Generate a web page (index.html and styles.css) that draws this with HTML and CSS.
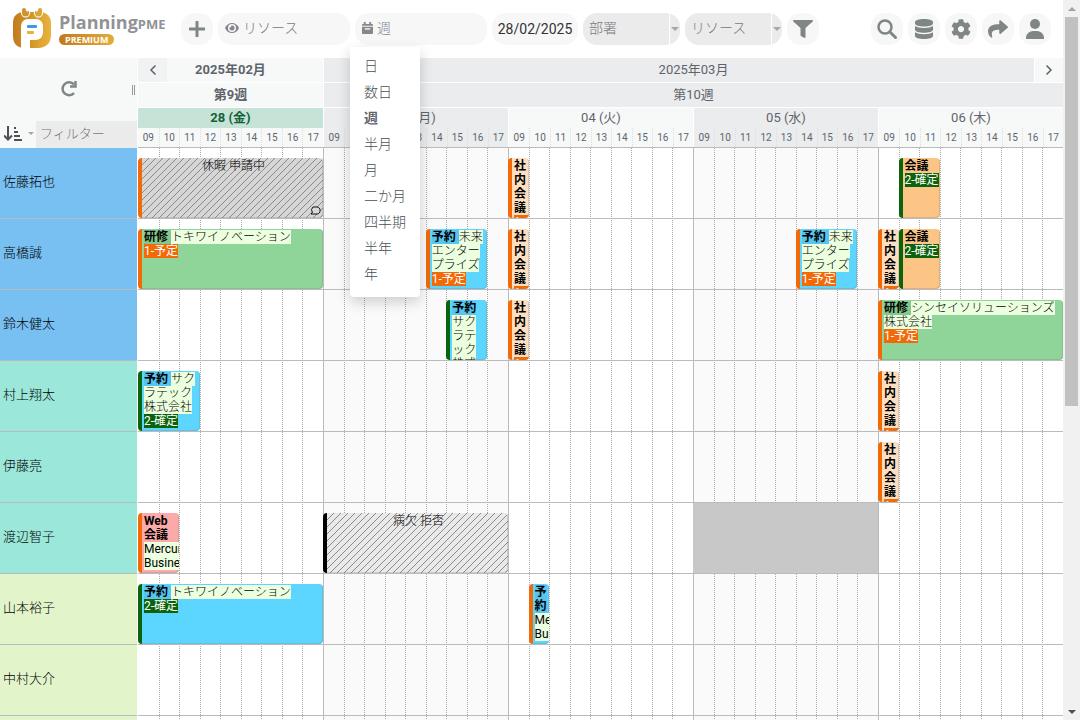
FILE: index.html
```html
<!DOCTYPE html>
<html lang="ja">
<head>
<meta charset="utf-8">
<title>PlanningPME</title>
<link rel="stylesheet" href="styles.css">
</head>
<body>
<div class="page">
  <header class="topbar">
    <a class="brand" href="#" aria-label="PlanningPME Premium">
      <svg class="brand-mark" viewBox="0 0 39 41" aria-hidden="true">
        <defs><linearGradient id="gold" x1="0" y1="0" x2="1" y2="0"><stop offset="0" stop-color="#c27a1c"/><stop offset="1" stop-color="#e8b43c"/></linearGradient></defs>
        <path fill="url(#gold)" d="M12 4h16c7 0 11 5 11 11v12c0 8-5 13-13 13H13C5 40 1 36 1 28V15C1 8 5 4 12 4z"/>
        <path fill="#fff" d="M9 41V19c0-5 3-8 7-8h8c4 0 7 3 7 7v6c0 5-3 8-8 8h-5v9z"/>
        <path fill="#fff" d="M9 3h9v2a4 4 0 0 1-9 0zM22 3h9v2a4 4 0 0 1-9 0z"/>
        <path fill="#d0922a" d="M10 2a2 2 0 0 1 4 0c0 2 3 2 3 0v3a3.500 3.500 0 0 1-7 0z"/>
        <path fill="#dca433" d="M23 2c0 2 3 2 3 0a2 2 0 0 1 4 0v3a3.500 3.500 0 0 1-7 0z"/>
        <rect x="15" y="17" width="10" height="3" rx="1" fill="#3a9ae8"/><rect x="15" y="23" width="7" height="3" rx="1" fill="#e5b23c"/>
      </svg>
      <span class="brand-words">
        <span class="brand-name">Planning<small>PME</small></span>
        <span class="brand-badge">PREMIUM</span>
      </span>
    </a>
    <button class="round" aria-label="追加"><svg width="16" height="16" viewBox="0 0 16 16"><path d="M8 1v14M1 8h14" fill="none" stroke="currentColor" stroke-width="3" stroke-linecap="round"/></svg></button>
    <label class="pill">
      <svg width="14" height="12" viewBox="0 0 14 12"><path fill="currentColor" fill-rule="evenodd" d="M7 1c3 0 6 2 7 5-1 3-4 5-7 5S1 9 0 6c1-3 4-5 7-5zm0 1a4 4 0 1 0 0 8 4 4 0 0 0 0-8zm0 1.500a2.500 2.500 0 1 1-2.400 1.800A1.400 1.400 0 0 0 6.300 3.600z"/></svg>
      <input type="text" placeholder="リソース" aria-label="リソース">
    </label>
    <div class="view">
      <button class="pill" aria-haspopup="listbox" aria-expanded="true">
        <svg width="11" height="12" viewBox="0 0 12 13"><path fill="currentColor" d="M2 0h2v2h4V0h2v2h1a1 1 0 0 1 1 1v1H0V3a1 1 0 0 1 1-1h1zM0 5h12v7a1 1 0 0 1-1 1H1a1 1 0 0 1-1-1z"/><path d="M3 7.500h6" stroke="#f7f7f7" stroke-width="1.500"/></svg>
        <span>週</span>
      </button>
      <ul class="menu" role="listbox">
        <li role="option">日</li>
        <li role="option">数日</li>
        <li role="option" aria-selected="true" class="current">週</li>
        <li role="option">半月</li>
        <li role="option">月</li>
        <li role="option">二か月</li>
        <li role="option">四半期</li>
        <li role="option">半年</li>
        <li role="option">年</li>
      </ul>
    </div>
    <input class="date" type="text" value="28/02/2025" aria-label="日付">
    <div class="combo"><select aria-label="部署"><option>部署</option></select><span class="combo-arrow"></span></div>
    <div class="combo"><select aria-label="リソース"><option>リソース</option></select><span class="combo-arrow"></span></div>
    <button class="round" aria-label="フィルター"><svg width="20" height="18" viewBox="0 0 512 512" preserveAspectRatio="none"><path fill="currentColor" d="M487.976 0H24.028C2.710 0-8.047 25.866 7.058 40.971L192 225.941V432c0 7.831 3.821 15.170 10.237 19.662l80 55.980C298.020 518.690 320 507.493 320 487.980V225.941l184.947-184.970C520.021 25.896 509.338 0 487.976 0z"/></svg></button>
    <div class="tools">
      <button class="round" aria-label="検索"><svg width="20" height="20" viewBox="0 0 20 20" fill="none" stroke="currentColor"><circle cx="8" cy="8" r="6.500" stroke-width="2.500"/><path d="M13 13l5.500 5.500" stroke-width="3" stroke-linecap="round"/></svg></button>
      <button class="round" aria-label="データ"><svg width="18" height="20" viewBox="0 0 18 20" fill="currentColor"><path d="M9 0c5 0 9 1.300 9 3v1.500c0 1.700-4 3-9 3s-9-1.300-9-3V3c0-1.700 4-3 9-3zM0 7c2 1.300 5 2 9 2s7-.7 9-2v3.800c0 1.700-4 3-9 3s-9-1.300-9-3zM0 13.200c2 1.300 5 2 9 2s7-.7 9-2V17c0 1.700-4 3-9 3s-9-1.300-9-3z"/></svg></button>
      <button class="round" aria-label="設定"><svg width="20" height="20" viewBox="0 0 512 512"><path fill="currentColor" d="M487.400 315.700l-42.600-24.600c4.300-23.200 4.300-47 0-70.200l42.600-24.600c4.900-2.800 7.100-8.600 5.500-14-11.100-35.600-30-67.800-54.700-94.600-3.800-4.100-10-5.100-14.800-2.300L380.800 110c-17.900-15.400-38.500-27.300-60.800-35.100V25.800c0-5.600-3.900-10.500-9.400-11.700-36.700-8.200-74.300-7.800-109.200 0-5.500 1.200-9.400 6.100-9.400 11.700V75c-22.200 7.900-42.800 19.800-60.800 35.100L88.700 85.500c-4.900-2.800-11-1.900-14.800 2.300-24.700 26.700-43.600 58.900-54.700 94.600-1.700 5.400.6 11.200 5.500 14L67.300 221c-4.300 23.200-4.300 47 0 70.200l-42.600 24.600c-4.900 2.800-7.100 8.600-5.500 14 11.100 35.600 30 67.800 54.700 94.600 3.800 4.100 10 5.100 14.800 2.300l42.600-24.600c17.900 15.400 38.500 27.300 60.800 35.100v49.200c0 5.600 3.900 10.500 9.400 11.700 36.700 8.200 74.300 7.800 109.200 0 5.500-1.200 9.400-6.100 9.400-11.700v-49.200c22.200-7.900 42.800-19.800 60.800-35.100l42.600 24.600c4.900 2.800 11 1.900 14.800-2.300 24.700-26.700 43.600-58.900 54.700-94.600 1.500-5.500-.7-11.300-5.600-14.100zM256 336c-44.100 0-80-35.900-80-80s35.900-80 80-80 80 35.900 80 80-35.900 80-80 80z"/></svg></button>
      <button class="round" aria-label="共有"><svg width="20" height="20" viewBox="0 0 512 512"><path fill="currentColor" d="M503.691 189.836L327.687 37.851C312.281 24.546 288 35.347 288 56.015v80.053C127.371 137.907 0 170.100 0 322.326c0 61.441 39.581 122.309 83.333 154.132 13.653 9.931 33.111-2.533 28.077-18.631C66.066 312.814 132.917 274.316 288 272.085V360c0 20.700 24.300 31.453 39.687 18.164l176.004-152c11.071-9.562 11.086-26.753 0-36.328z"/></svg></button>
      <button class="round" aria-label="アカウント"><svg width="18" height="20" viewBox="0 0 18 20" fill="currentColor"><circle cx="9" cy="5" r="5"/><path d="M0 20v-2a7 7 0 0 1 7-6h4a7 7 0 0 1 7 6v2z"/></svg></button>
    </div>
  </header>

  <main class="schedule">
    <div class="head">
      <div class="corner">
        <div class="corner-top">
          <button class="refresh" aria-label="更新"><svg width="18" height="17" viewBox="0 0 18 17" fill="none" stroke="currentColor" stroke-width="2.500"><path d="M14 4.500A6.500 6.500 0 1 0 14 13"/><path d="M15.500 1v5.500H10" /></svg></button>
          <span class="grip"></span>
        </div>
        <div class="corner-filter">
          <button class="sort" aria-label="並べ替え"><svg width="18" height="15" viewBox="0 0 18 15" fill="none" stroke="currentColor" stroke-width="2"><path d="M4 0v13M0 9.500l4 4 4-4"/><path d="M10 2h2M10 6h4M10 10h6M10 14h8"/></svg><i class="caret"></i></button>
          <input type="text" placeholder="フィルター" aria-label="フィルター">
        </div>
      </div>
      <div class="axis">
        <div class="band months">
          <div class="light strong"><button class="nav" aria-label="前へ"><svg width="8" height="12" viewBox="0 0 8 12"><path d="M6.500 1.500L2 6l4.500 4.500" fill="none" stroke="currentColor" stroke-width="1.500"/></svg></button><span>2025年02月</span></div>
          <div class="dark wide"><span>2025年03月</span><button class="nav next" aria-label="次へ"><svg width="8" height="12" viewBox="0 0 8 12"><path d="M1.500 1.500L6 6l-4.500 4.500" fill="none" stroke="currentColor" stroke-width="1.500"/></svg></button></div>
        </div>
        <div class="band weeks">
          <div class="light strong">第9週</div>
          <div class="dark wide">第10週</div>
        </div>
        <div class="band days">
          <div class="today strong">28 (金)</div>
          <div class="dark">03 (月)</div>
          <div class="light">04 (火)</div>
          <div class="dark">05 (水)</div>
          <div class="light">06 (木)</div>
        </div>
        <div class="band hours">
          <div class="light"><span>09</span><span>10</span><span>11</span><span>12</span><span>13</span><span>14</span><span>15</span><span>16</span><span>17</span></div>
          <div class="dark"><span>09</span><span>10</span><span>11</span><span>12</span><span>13</span><span>14</span><span>15</span><span>16</span><span>17</span></div>
          <div class="light"><span>09</span><span>10</span><span>11</span><span>12</span><span>13</span><span>14</span><span>15</span><span>16</span><span>17</span></div>
          <div class="dark"><span>09</span><span>10</span><span>11</span><span>12</span><span>13</span><span>14</span><span>15</span><span>16</span><span>17</span></div>
          <div class="light"><span>09</span><span>10</span><span>11</span><span>12</span><span>13</span><span>14</span><span>15</span><span>16</span><span>17</span></div>
        </div>
      </div>
    </div>

    <div class="board">
      <div class="lines" aria-hidden="true">
        <div><i></i><i></i><i></i><i></i><i></i><i></i><i></i><i></i><i></i></div>
        <div class="alt"><i></i><i></i><i></i><i></i><i></i><i></i><i></i><i></i><i></i></div>
        <div><i></i><i></i><i></i><i></i><i></i><i></i><i></i><i></i><i></i></div>
        <div class="alt"><i></i><i></i><i></i><i></i><i></i><i></i><i></i><i></i><i></i></div>
        <div><i></i><i></i><i></i><i></i><i></i><i></i><i></i><i></i><i></i></div>
      </div>
      <div class="rows">
        <div class="row">
          <div class="name team-a">佐藤拓也</div>
          <div class="lane">
            <div class="event planned leave pending" style="grid-column:1 / span 9">休暇 申請中<svg class="note" width="11" height="10" viewBox="0 0 11 10"><path d="M3 1h4a3 3 0 0 1 3 3.500A3 3 0 0 1 7 8H1l1.500-1.500A4 4 0 0 1 3 1z" fill="#d9d9d9" stroke="#111" stroke-width="1"/></svg></div>
            <div class="event planned internal" style="grid-column:19 / span 1"><b>社内会議 </b><em>1-予定</em></div>
            <div class="event fixed meeting" style="grid-column:38 / span 2"><b>会議 </b><em>2-確定</em></div>
          </div>
        </div>
        <div class="row">
          <div class="name team-a">高橋誠</div>
          <div class="lane">
            <div class="event planned training" style="grid-column:1 / span 9"><b>研修 </b><span>トキワイノベーション</span><br><em>1-予定</em></div>
            <div class="event planned booking" style="grid-column:15 / span 3"><b>予約 </b><span>未来エンタープライズ</span><br><em>1-予定</em></div>
            <div class="event planned internal" style="grid-column:19 / span 1"><b>社内会議 </b><em>1-予定</em></div>
            <div class="event planned booking" style="grid-column:33 / span 3"><b>予約 </b><span>未来エンタープライズ</span><br><em>1-予定</em></div>
            <div class="event planned internal" style="grid-column:37 / span 1"><b>社内会議 </b><em>1-予定</em></div>
            <div class="event fixed meeting" style="grid-column:38 / span 2"><b>会議 </b><em>2-確定</em></div>
          </div>
        </div>
        <div class="row">
          <div class="name team-a">鈴木健太</div>
          <div class="lane">
            <div class="event fixed booking" style="grid-column:16 / span 2"><b>予約 </b><span>サクラテック株式会社</span><br><em>2-確定</em></div>
            <div class="event planned internal" style="grid-column:19 / span 1"><b>社内会議 </b><em>1-予定</em></div>
            <div class="event planned training" style="grid-column:37 / span 9"><b>研修 </b><span>シンセイソリューションズ株式会社</span><br><em>1-予定</em></div>
          </div>
        </div>
        <div class="row">
          <div class="name team-b">村上翔太</div>
          <div class="lane">
            <div class="event fixed booking" style="grid-column:1 / span 3"><b>予約 </b><span>サクラテック株式会社</span><br><em>2-確定</em></div>
            <div class="event planned internal" style="grid-column:37 / span 1"><b>社内会議 </b><em>1-予定</em></div>
          </div>
        </div>
        <div class="row">
          <div class="name team-b">伊藤亮</div>
          <div class="lane">
            <div class="event planned internal" style="grid-column:37 / span 1"><b>社内会議 </b><em>1-予定</em></div>
          </div>
        </div>
        <div class="row">
          <div class="name team-b">渡辺智子</div>
          <div class="lane">
            <div class="event planned web" style="grid-column:1 / span 2"><b>Web 会議 </b><span class="latin">Mercury Business</span></div>
            <div class="event refused leave" style="grid-column:10 / span 9">病欠 拒否</div>
            <div class="closed" style="grid-column:28 / span 9"></div>
          </div>
        </div>
        <div class="row">
          <div class="name team-c">山本裕子</div>
          <div class="lane">
            <div class="event fixed booking" style="grid-column:1 / span 9"><b>予約 </b><span>トキワイノベーション</span><br><em>2-確定</em></div>
            <div class="event planned booking" style="grid-column:20 / span 1"><b>予約 </b><span class="latin">Mercury Business</span></div>
          </div>
        </div>
        <div class="row">
          <div class="name team-c">中村大介</div>
          <div class="lane"></div>
        </div>
        <div class="row">
          <div class="name team-c"></div>
          <div class="lane"></div>
        </div>
      </div>
    </div>
  </main>
</div>
<div class="scrollbar" aria-hidden="true"><span class="arrow up"></span><span class="thumb"></span><span class="arrow down"></span></div>
</body>
</html>
```
FILE: styles.css
```css
* { box-sizing: border-box; }

body {
  margin: 0;
  height: 100vh;
  display: flex;
  overflow: hidden;
  background: #fff;
  color: #5f646c;
  font: 13px/20px Roboto, "Noto Sans CJK JP", sans-serif;
}

button, input, select {
  margin: 0;
  padding: 0;
  border: 0;
  background: none;
  color: inherit;
  font: inherit;
  outline: 0;
}

svg { display: block; flex: none; }

.page {
  flex: 1;
  min-width: 0;
  display: flex;
  flex-direction: column;
}

/* Top bar */
.topbar {
  flex: none;
  display: flex;
  align-items: center;
  gap: 5px;
  height: 58px;
  padding: 0 12px 1px;
  font-size: 14px;
  font-weight: 300;
}

.brand {
  flex: none;
  display: flex;
  gap: 8px;
  width: 164px;
  text-decoration: none;
}

.brand-mark { width: 39px; height: 41px; }

.brand-words {
  display: flex;
  flex-direction: column;
  align-items: flex-start;
  padding-top: 4px;
}

.brand-name {
  font: 700 18px/20px "Open Sans", sans-serif;
  color: #929297;
  white-space: nowrap;
}

.brand-name small { font-size: 13px; }

.brand-badge {
  padding: 0 6px;
  border-radius: 6px;
  background: linear-gradient(90deg, #c27a1c, #e3ad39);
  color: #fff;
  font: 700 9px/11px "Open Sans", sans-serif;
}

.round {
  flex: none;
  width: 32px;
  height: 32px;
  display: flex;
  align-items: center;
  justify-content: center;
  border-radius: 14px;
  background: #f7f7f7;
  color: #7f8685;
}

.pill {
  width: 132px;
  height: 32px;
  display: flex;
  align-items: center;
  gap: 4px;
  padding: 0 7px 2px;
  border-radius: 14px;
  background: #f7f7f7;
  color: #84878c;
}

.pill input { flex: 1; min-width: 0; }

::placeholder { color: #75787d; opacity: 1; }

.view { position: relative; }

.menu {
  position: absolute;
  z-index: 5;
  top: 34px;
  left: -5px;
  width: 70px;
  margin: 0;
  padding: 6px 0 10px 14px;
  border-radius: 0 0 4px 4px;
  background: #fff;
  box-shadow: 0 5px 14px rgba(0, 0, 0, .18);
  list-style: none;
  line-height: 26px;
  color: #4a4f56;
  white-space: nowrap;
}

.menu .current { font-weight: 700; color: #5f646c; }

.date {
  width: 86px;
  height: 32px;
  border-radius: 14px;
  background: #f7f7f7;
  color: #333;
  font-weight: 400;
  text-align: center;
}

.combo {
  width: 97px;
  height: 32px;
  display: flex;
  gap: 1px;
  border-radius: 14px;
  overflow: hidden;
  color: #75787d;
}

.combo select {
  flex: 1;
  min-width: 0;
  padding: 0 0 2px 6px;
  appearance: none;
  background: #ebebeb;
}

.combo-arrow {
  width: 10px;
  display: flex;
  align-items: center;
  justify-content: center;
  background: #ebebeb;
}

.combo-arrow::after, .caret {
  content: "";
  border: 4px solid transparent;
  border-top-color: #a6a6a6;
  border-bottom: 0;
}

.caret { border-width: 3px 3px 0; }

.tools {
  display: flex;
  gap: 5px;
  margin-left: auto;
}

/* Header of the timeline */
.schedule {
  flex: 1;
  min-height: 0;
  display: flex;
  flex-direction: column;
  overflow: hidden;
}

.head { flex: none; display: flex; }

.corner {
  flex: none;
  width: 137px;
  margin-right: 1px;
  display: flex;
  flex-direction: column;
}

.corner-top {
  flex: 1;
  display: flex;
  background: #f7f9f9;
}

.refresh {
  flex: 1;
  display: flex;
  align-items: center;
  justify-content: center;
  padding: 0 0 2px 6px;
  color: #7f8685;
}

.grip {
  align-self: center;
  width: 3px;
  height: 10px;
  margin: 0 2px 0 1px;
  border: 1px solid #999;
  border-width: 0 1px;
}

.corner-filter { display: flex; height: 27px; }

.sort {
  width: 36px;
  display: flex;
  align-items: center;
  gap: 6px;
  padding: 0 0 2px 4px;
  background: #f7f9f9;
  color: #4d5257;
}

.corner-filter input {
  flex: 1;
  min-width: 0;
  padding: 0 0 2px 4px;
  background: #ebebeb;
  font-weight: 300;
}

.axis {
  flex: 1;
  min-width: 0;
  border-bottom: 1px solid #bbb;
}

.band { display: grid; grid-template-columns: repeat(5, minmax(0, 1fr)); text-align: center; }
.months, .weeks { height: 25px; border-bottom: 1px solid #fff; line-height: 24px; }
.days { line-height: 20px; }
.band > div + div { border-left: 1px solid #fff; }
.wide { grid-column: span 4; }
.light { background: #f7f9f9; }
.dark { background: #ebecee; }
.today { background: #c5e3d6; color: #14613a; }
.strong { font-weight: 700; }

.months > div { display: grid; }
.months span { grid-area: 1 / 1; }

.nav {
  grid-area: 1 / 1;
  z-index: 1;
  width: 29px;
  display: flex;
  align-items: center;
  justify-content: center;
  background: #f1f2f3;
}

.next { justify-self: end; border-left: 1px solid #fff; background: #f7f9f9; }

.hours { font-size: 10px; line-height: 19px; }
.hours > div, .lines > div { display: grid; grid-template-columns: repeat(9, minmax(0, 1fr)); }
.hours span + span { border-left: 1px dotted #ddd; }

/* Resource rows */
.board { flex: none; display: grid; grid-template-columns: 138px minmax(0, 1fr); }

.lines {
  grid-area: 1 / 2;
  display: grid;
  grid-template-columns: repeat(5, minmax(0, 1fr));
}

.lines i { border-left: 1px dotted #aaa; }
.lines i:first-child { border-left: 1px solid #bbb; }
.lines div:first-child i:first-child { border-left: 0; }
.lines .alt { background: #fafafa; }

.rows { grid-area: 1 / 1 / 2 / 3; }

.row { display: grid; grid-template-columns: 138px minmax(0, 1fr); height: 71px; }

.name {
  display: flex;
  align-items: center;
  margin-right: 1px;
  padding: 0 0 2px 3px;
  border-bottom: 1px solid #b4bcc0;
  color: #000;
  font-weight: 300;
}

.team-a { background: #78bff2; }
.team-b { background: #9be7d9; }
.team-c { background: #e2f5ca; }

.lane {
  display: grid;
  grid-template-columns: repeat(45, minmax(0, 1fr));
  grid-template-rows: 60px;
  padding-top: 10px;
  border-bottom: 1px solid #bbb;
}

.event {
  position: relative;
  overflow: hidden;
  padding: 1px 0 0 2px;
  border-left: 4px solid var(--status);
  border-radius: 4px;
  background: var(--fill);
  box-shadow: inset -1px -1px rgba(120, 120, 120, .25);
  color: #000;
  font-size: 12px;
  line-height: 14px;
  font-weight: 300;
}

.event b { background: var(--tag, none); font-weight: 700; }
.event span { background: #ecffdf; }
.event .latin { font-weight: 400; }
.event em {
  display: inline-block;
  vertical-align: top;
  background: var(--status);
  color: #fff;
  font-style: normal;
  font-weight: 400;
}

.planned { --status: #f26a08; }
.fixed { --status: #0b640b; }
.refused { --status: #000; }
.booking { --fill: #5cd5ff; --tag: #56c6f0; }
.training { --fill: #8fd499; --tag: #83c78d; }
.meeting { --fill: #fcc585; }
.internal { --fill: #fddfbf; }
.web { --fill: #fba9a9; }

.leave {
  --fill: #e9e9e9;
  background: linear-gradient(135deg, transparent 44%, #8a8a8a 44% 56%, transparent 56%) 0 0 / 7px 7px var(--fill);
  text-align: center;
}

.pending { --fill: #d6d6d6; }

.note { position: absolute; right: 2px; bottom: 2px; }

.closed { margin-top: -10px; background: #c8c8c8; }

/* Page scrollbar */
.scrollbar {
  flex: none;
  width: 17px;
  display: flex;
  flex-direction: column;
  align-items: center;
  background: #f1f1f1;
}

.arrow { height: 17px; display: flex; align-items: center; }
.arrow::after { content: ""; border: 4px solid transparent; }
.up::after { border-top: 0; border-bottom-color: #a3a3a3; }
.down::after { border-bottom: 0; border-top-color: #505050; }
.down { margin-top: auto; }
.thumb { width: 13px; height: 54%; background: #c1c1c1; }
```
